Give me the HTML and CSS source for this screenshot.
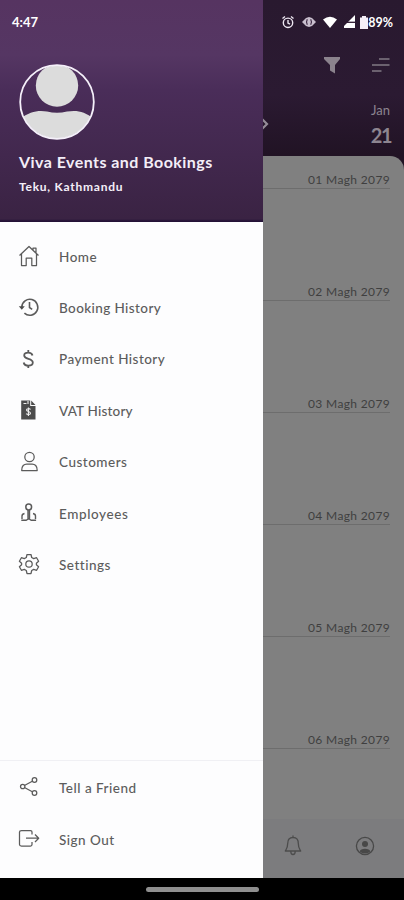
FILE: index.html
```
<!DOCTYPE html>
<html lang="en">
<head>
<meta charset="utf-8">
<title>Viva Events and Bookings</title>
<link rel="stylesheet" href="styles.css">
</head>
<body>
<div class="screen">
  <main class="calendar">
    <header class="top">
      <div class="tools">
        <svg width="18" height="18" viewBox="0 0 18 18"><path d="M1 1h16v2l-5 6v8.500l-5-3V9L1 3z" fill="#8b838d"/></svg>
        <svg width="20" height="18" viewBox="0 0 20 18" fill="none" stroke="#817984" stroke-width="1.600"><path d="M8 3h10.500M1 9h17.500M1 15h9.500"/></svg>
      </div>
      <div class="date-row">
        <svg width="8" height="14" viewBox="0 0 8 14" fill="none" stroke="#958d98" stroke-width="2.200"><path d="M0 2l5 5-5 5"/></svg>
        <div class="today"><span class="month">Jan</span><span class="day">21</span></div>
      </div>
    </header>
    <section class="days">
      <div class="day-row"><span>01 Magh 2079</span></div>
      <div class="day-row"><span>02 Magh 2079</span></div>
      <div class="day-row"><span>03 Magh 2079</span></div>
      <div class="day-row"><span>04 Magh 2079</span></div>
      <div class="day-row"><span>05 Magh 2079</span></div>
      <div class="day-row"><span>06 Magh 2079</span></div>
    </section>
    <nav class="tabs">
      <svg width="18" height="22" viewBox="0 0 18 22" fill="none" stroke="#4c4c4c" stroke-width="1.300" stroke-linejoin="round"><path d="M9 .5v2M9 2.500C5 2.500 3.700 5 3.700 8.500c0 4-1 5-2.400 7.500h15.400c-1.400-2.500-2.400-3.500-2.400-7.500C14.300 5 13 2.500 9 2.500zM6.800 16.500c0 4 4.400 4 4.400 0"/></svg>
      <svg width="20" height="20" viewBox="0 0 20 20"><circle cx="10" cy="10" r="8.600" fill="none" stroke="#484848" stroke-width="1.300"/><circle cx="10" cy="8" r="3" fill="#484848"/><path d="M4.800 15.500c0-3.700 10.400-3.700 10.400 0C13 18 7 18 4.800 15.500z" fill="#484848"/></svg>
    </nav>
  </main>

  <aside class="drawer">
    <header class="profile">
      <svg class="avatar" width="76" height="76" viewBox="0 0 76 76">
        <clipPath id="disc"><circle cx="38" cy="38" r="36.500"/></clipPath>
        <g clip-path="url(#disc)" fill="#dcdcdc"><circle cx="38" cy="21.500" r="21.200"/><path d="M0 56C10 47 20 46 28 47.500q10 2.500 20 0C58 46 66 47 76 56v20H0z"/></g>
        <circle cx="38" cy="38" r="36.800" fill="none" stroke="#f5f0fa" stroke-width="1.800"/>
      </svg>
      <h1><span class="t-title">Viva Events and Bookings</span></h1>
      <p><span class="t-sub">Teku, Kathmandu</span></p>
    </header>
    <nav class="menu">
      <a class="item"><svg class="ico" viewBox="0 0 22 22"><path d="M1.500 10.500L11 1.500l9.500 9M3.500 9v11.500h4.700v-7.500h5.600v7.500h4.700V9M15 5V3h3v5"/></svg><span class="l-home">Home</span></a>
      <a class="item"><svg class="ico" viewBox="0 0 22 22"><path stroke-width="1.600" d="M3.800 11a8 8 0 1 1 2.600 6.200M11.500 6v5.500l2.700 1.800"/><path class="solid" d="M.8 10.300h6L3.800 13.800z"/></svg><span class="l-booking">Booking History</span></a>
      <a class="item"><svg class="ico" viewBox="0 0 22 22"><path stroke-width="1.800" d="M14.500 7.500C13.700 3.700 6.200 3.700 6.200 7.500c0 4.200 8.600 2.600 8.600 7 0 4.200-8.400 4.200-9.100 0M10.300 2v3M10.300 17v3"/></svg><span class="l-payment">Payment History</span></a>
      <a class="item"><svg class="ico" viewBox="0 0 22 22"><path class="solid" d="M3.200 1.500h9v5.500h5.300v13.500H3.200z M13.200 1.500l4.300 4.500h-4.300z"/><path class="light" d="M5.500 4.500h3M10 2v3M12.500 10.500c-1-1.300-4-1-4 .5 0 1.900 4 1.100 4 3.200 0 1.500-3 1.900-4.300.4M10.400 8.500v8.500"/></svg><span class="l-vat">VAT History</span></a>
      <a class="item"><svg class="ico" viewBox="0 0 22 22"><circle cx="11.500" cy="6" r="4.700"/><path d="M3.700 19.500c-.2-4.800 2.500-6.500 5-6.500h5.500c2.500 0 5.200 1.700 5 6.500z"/></svg><span class="l-customers">Customers</span></a>
      <a class="item"><svg class="ico" viewBox="0 0 22 22"><circle cx="10.700" cy="5" r="2.900" stroke-width="1.500"/><path stroke-width="1.400" d="M10 8v8.500M11.500 8v8.500M6.500 11.500Q4 12 4 14v3M15 11.500q2.500.5 2.500 2.500v3M3.300 18.300h5l2.400-1.700 2.400 1.700h5"/></svg><span class="l-employees">Employees</span></a>
      <a class="item"><svg class="ico" viewBox="0 0 22 22"><circle cx="11" cy="11" r="3.200"/><path d="M9 1.500h4l.7 3 2 1.100 2.900-.9 2 3.500-2.200 2v1.600l2.200 2-2 3.500-2.900-.9-2 1.100-.7 3H9l-.7-3-2-1.100-2.900.9-2-3.500 2.200-2v-1.600l-2.200-2 2-3.500 2.900.9 2-1.100z"/></svg><span class="l-settings">Settings</span></a>
    </nav>
    <nav class="menu foot">
      <a class="item"><svg class="ico" viewBox="0 0 22 22"><circle cx="4.700" cy="10.500" r="2.200"/><circle cx="16.500" cy="4" r="2.300"/><circle cx="16.500" cy="17" r="2.300"/><path d="M6.900 9.300l7.400-4M6.900 11.800l7.400 4"/></svg><span class="l-tell">Tell a Friend</span></a>
      <a class="item"><svg class="ico" viewBox="0 0 22 22"><path d="M14 6.500V4q0-1.500-1.500-1.500h-9Q1.500 2.500 1.500 4v12.500q0 1.500 2 1.500h9q1.500 0 1.500-1.500V14M8 10.200h12.500M17 6.500l3.700 3.700L17 14"/></svg><span class="l-sign">Sign Out</span></a>
    </nav>
  </aside>

  <div class="status">
    <span class="time">4:47</span>
    <div class="signals">
      <svg width="14" height="14" viewBox="0 0 14 14" fill="none" stroke="#eee8f2" stroke-width="1.400"><circle cx="7" cy="7.800" r="4.700"/><path d="M1.500 3.500L4 1.500M12.500 3.500L10 1.500M7 5v3l2 1.200"/></svg>
      <svg width="14" height="12" viewBox="0 0 14 12"><path d="M0 6l4-4 3-1 3 1 4 4-4 4-3 1-3-1z" fill="#c9bfce"/><path d="M5.300 3.300q-1.500 2.700 0 5.400M8.700 3.300q1.500 2.700 0 5.400" fill="none" stroke="#35203b" stroke-width="1.100"/></svg>
      <svg width="14" height="12" viewBox="0 0 14 12"><path d="M0 3.500Q7-2 14 3.500L7 12z" fill="#fff"/></svg>
      <svg width="11" height="14" viewBox="0 0 11 14"><path d="M11 0v13H0v-2z" fill="#fff"/><path d="M0 7.300h11" stroke="#2c1830" stroke-width="1.300"/></svg>
      <svg class="cell" width="8" height="13" viewBox="0 0 8 13"><path d="M0 1.500h2V0h4v1.500h2V13H0z" fill="#f4eff7"/></svg>
      <span class="battery">89%</span>
    </div>
  </div>
  <footer class="system"><div class="pill"></div></footer>
</div>
</body>
</html>
```
FILE: styles.css
```
* { box-sizing: border-box; }
body { margin: 0; font-family: Lato, "Liberation Sans", sans-serif; }
h1, p { margin: 0; }
svg { display: block; flex: none; }

.screen {
  position: relative;
  width: 404px;
  height: 900px;
  overflow: hidden;
  display: flex;
  flex-direction: column;
  background: #000;
}

.calendar {
  flex: 1;
  min-height: 0;
  display: flex;
  flex-direction: column;
  background: linear-gradient(#29192f 0, #2b1a32 95px, #211324 155px, #211324 200px);
}
.top { flex: none; height: 156px; padding: 56px 13px 0 0; }
.tools { display: flex; justify-content: flex-end; gap: 30px; }
.date-row {
  display: flex;
  justify-content: space-between;
  align-items: flex-start;
  padding: 27px 1px 0 262px;
}
.date-row > svg { margin-top: 16px; }
.today { display: flex; flex-direction: column; align-items: flex-end; color: #8d8590; }
.month { font-size: 13px; line-height: 18px; }
.day { font-size: 20px; line-height: 32px; font-weight: 700; letter-spacing: -1.500px; margin-right: -1px; }

.days {
  flex: 1;
  min-height: 0;
  overflow: hidden;
  background: #808080;
  border-top-right-radius: 14px;
}
.day-row {
  height: 112px;
  margin-right: 14px;
  display: flex;
  flex-direction: column;
  text-align: right;
  font-size: 12px;
  line-height: 17px;
  letter-spacing: .35px;
  color: #3f3f3f;
  padding-top: 15px;
}
.day-row span { border-bottom: 1px solid #6d6d6d; }
.tabs {
  flex: none;
  height: 59px;
  padding: 0 29px 5px 284px;
  display: flex;
  align-items: center;
  justify-content: space-between;
  background: #7c7c7e;
}

.drawer {
  position: absolute;
  left: 0;
  top: 0;
  width: 262.500px;
  height: 878px;
  display: flex;
  flex-direction: column;
  background: #fdfdfe;
}
.profile {
  height: 222px;
  padding: 64px 0 0 19px;
  color: #f4eef8;
  background: linear-gradient(#563461 0, #553663 55px, #4a2d59 90px, #3a2343 219px, #241237 221px);
}
.profile h1 { margin-top: 12px; font-size: 16px; line-height: 20px; font-weight: 700; white-space: nowrap; }
.profile p { margin-top: 6px; font-size: 12px; line-height: 18px; font-weight: 700; }
.t-title { letter-spacing: .45px; }
.t-sub { letter-spacing: .75px; }

.menu { padding-top: 9px; display: flex; flex-direction: column; }
.item {
  height: 51.400px;
  padding-left: 18px;
  display: flex;
  align-items: center;
  gap: 19px;
  font-size: 13.500px;
  font-weight: 500;
  letter-spacing: .5px;
  color: #5c5c5c;
  white-space: nowrap;
}
.l-booking { letter-spacing: .4px; }
.l-payment { letter-spacing: .45px; }
.l-vat { letter-spacing: .2px; }
.l-employees { letter-spacing: .6px; }
.ico { width: 22px; height: 22px; margin-top: -1.500px; fill: none; stroke: #5b5b5b; stroke-width: 1.250; stroke-linejoin: round; }
.ico .solid { fill: #4c4c4c; stroke: none; }
.ico .light { stroke: #efefef; stroke-width: 1.100; }
.foot { margin-top: auto; height: 118px; padding-top: 1.500px; border-top: 1px solid #f0f0f4; }

.status {
  position: absolute;
  left: 0;
  top: 12px;
  width: 404px;
  height: 20px;
  padding: 0 11px 0 12px;
  display: flex;
  align-items: center;
  justify-content: space-between;
  color: #fff;
  font-size: 13px;
  font-weight: 700;
}
.signals { display: flex; align-items: center; gap: 7px; }
.cell { margin-left: -2px; }
.battery { margin-left: -6.500px; font-size: 12.500px; }

.system { flex: none; height: 22px; padding-top: 9px; background: #000; }
.pill { width: 113px; height: 5px; margin: 0 auto; border-radius: 3px; background: #8f8f8f; }
```
